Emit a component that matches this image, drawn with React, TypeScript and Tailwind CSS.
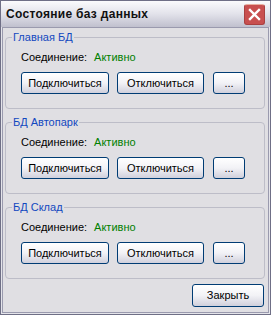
const font = { fontFamily: '"Liberation Sans", Arial, sans-serif' }

function XpButton({ label, width }: { label: string; width: string }) {
  return (
    <button
      className={`${width} h-[22px] rounded-[3px] border border-[#003c74] bg-gradient-to-b from-[#ffffff] via-[#f2f2f6] to-[#d0d0dc] text-[11px] text-black flex items-center justify-center`}
    >
      {label}
    </button>
  )
}

function DbGroup({ title }: { title: string }) {
  return (
    <div className="relative h-[72px] rounded-[4px] border border-[#bdbdc8]">
      <span className="absolute left-[6px] top-[-8px] bg-[#e0dfe3] px-[1px] text-[11px] leading-[14px] text-[#1248c0]">
        {title}
      </span>
      <div className="flex items-center pl-[15px] pt-[12px] text-[11px] leading-[14px]">
        <span className="text-black">Соединение:</span>
        <span className="ml-[7px] text-[#008000]">Активно</span>
      </div>
      <div className="flex pl-[15px] pt-[8px]">
        <XpButton label="Подключиться" width="w-[88px]" />
        <div className="w-[8px]" />
        <XpButton label="Отключиться" width="w-[87px]" />
        <div className="w-[9px]" />
        <XpButton label="..." width="w-[32px]" />
      </div>
    </div>
  )
}

export default function App() {
  return (
    <div style={font} className="w-[271px] h-[315px] flex flex-col border border-[#6f6f86] bg-[#e4e4ea]">
      <div className="h-[26px] flex items-center justify-between bg-gradient-to-b from-[#fbfbfd] via-[#e2e2ea] to-[#c0c0ce] pl-[5px] pr-[5px]">
        <span className="text-[12px] font-bold text-[#111111] tracking-[0.3px]">Состояние баз данных</span>
        <div className="w-[21px] h-[21px] rounded-[3px] bg-[#c84f4f] border border-[#a94040] border-t-[#e8b0a0] flex items-center justify-center">
          <svg width="13" height="13" viewBox="0 0 13 13">
            <path d="M2 2 L11 11 M11 2 L2 11" stroke="#ffffff" strokeWidth="2.4" strokeLinecap="square" />
          </svg>
        </div>
      </div>
      <div className="flex-1 px-[1px] pb-[1px]">
        <div className="h-full border border-[#9a9aae] bg-[#e0dfe3] pl-[2px] pr-[3px] pt-[9px] flex flex-col">
          <div className="flex flex-col gap-[13px]">
            <DbGroup title="Главная БД" />
            <DbGroup title="БД Автопарк" />
            <DbGroup title="БД Склад" />
          </div>
          <div className="flex justify-end pt-[5px] pr-[1px]">
            <button className="w-[72px] h-[23px] rounded-[3px] border border-[#003c74] bg-gradient-to-b from-[#ffffff] via-[#f2f2f6] to-[#d0d0dc] text-[11px] text-black flex items-center justify-center">
              Закрыть
            </button>
          </div>
        </div>
      </div>
    </div>
  )
}
